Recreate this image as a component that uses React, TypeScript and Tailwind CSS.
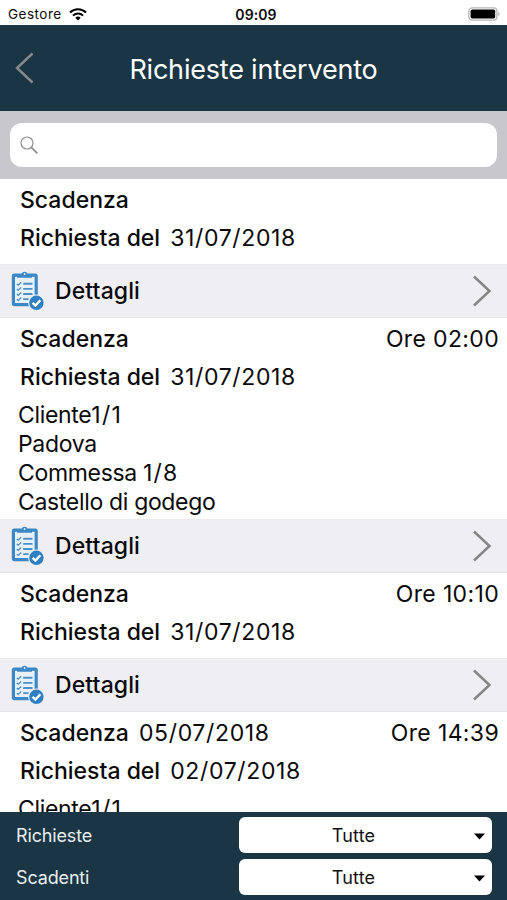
import React, { useState } from 'react';

interface Richiesta {
  id: number;
  scadenza?: string;
  richiestaDel: string;
  ora?: string;
  righe?: string[];
  parziale?: boolean;
}

const richieste: Richiesta[] = [
  { id: 1, richiestaDel: '31/07/2018' },
  {
    id: 2,
    richiestaDel: '31/07/2018',
    ora: '02:00',
    righe: ['Cliente1/1', 'Padova', 'Commessa 1/8', 'Castello di godego'],
  },
  { id: 3, richiestaDel: '31/07/2018', ora: '10:10' },
  { id: 4, scadenza: '05/07/2018', richiestaDel: '02/07/2018', ora: '14:39', righe: ['Cliente1/1'], parziale: true },
];

function ClipboardIcon() {
  return (
    <svg className="w-[34px] h-[40px] shrink-0" viewBox="0 0 34 40" fill="none">
      <rect x="2.4" y="4.2" width="22.8" height="29.4" rx="1" fill="#e9f1f8" stroke="#3c87c6" strokeWidth="3.2" />
      <path d="M6.2 6.8V4.4c0-1 .8-1.4 1.8-1.4h2.6a3.1 3.1 0 0 1 6 0h2.6c1 0 1.8.4 1.8 1.4v2.4z" fill="#3c87c6" />
      <circle cx="13.6" cy="3" r="0.9" fill="#e9f1f8" />
      <path d="M12.2 12.8h9.3M12.2 17.9h9.3M12.2 23h9.3M12.2 28.1h5.5" stroke="#4b90ca" strokeWidth="1.9" />
      <path
        d="M5.8 12.9l1.4 1.2 3-2.8M5.8 18l1.4 1.2 3-2.8M5.8 23.1l1.4 1.2 3-2.8M5.8 28.2l1.4 1.2 3-2.8"
        stroke="#4b90ca"
        strokeWidth="1.3"
      />
      <circle cx="25.4" cy="31.8" r="8.3" fill="#efeef3" />
      <circle cx="25.4" cy="31.8" r="7.2" fill="#2f80c3" />
      <path d="M21.6 31.9l2.8 2.7 4.9-5.3" stroke="#fff" strokeWidth="2.4" />
    </svg>
  );
}

function WifiIcon() {
  return (
    <svg className="w-[18px] h-[13px]" viewBox="0 0 18 13" fill="none" stroke="#000">
      <path d="M1 4.6a11.3 11.3 0 0 1 16 0" strokeWidth="2.1" />
      <path d="M4 7.6a7.1 7.1 0 0 1 10 0" strokeWidth="2" />
      <path d="M6.3 9.8a3.9 3.9 0 0 1 5.4 0L9 12.5z" fill="#000" stroke="none" />
    </svg>
  );
}

function StatusBar() {
  return (
    <div className="grid grid-cols-3 items-center h-[25px] shrink-0 bg-white pt-[3px] text-[13.5px] leading-none">
      <div className="flex items-center gap-[7px] pl-[8px]">
        <span className="tracking-[0.5px] pt-px">Gestore</span>
        <WifiIcon />
      </div>
      <div className="text-center font-semibold pl-[5px] pt-px text-[14px] tracking-[0.1px]">09:09</div>
      <div className="flex justify-end pr-[7px]">
        <svg className="w-[32px] h-[14px]" viewBox="0 0 32 14">
          <rect x="0.9" y="0.9" width="28" height="12.2" rx="3.4" fill="#fff" stroke="#b5b5b5" strokeWidth="1.3" />
          <rect x="2.6" y="2.6" width="24.6" height="8.8" rx="1.6" fill="#000" />
          <path d="M30.3 5v4c1.6-.8 1.6-3.2 0-4z" fill="#a5a5a5" />
        </svg>
      </div>
    </div>
  );
}

// Digits are set wider than the words around them
function Riga({ testo }: { testo: string }) {
  const [, parole, numeri] = testo.match(/^(\D*)(.*)$/) ?? ['', testo, ''];
  return (
    <div className="whitespace-pre tracking-[-0.33px]">
      {parole}
      {numeri && <span className="tracking-[1.2px]">{numeri}</span>}
    </div>
  );
}

function RichiestaItem({ item }: { item: Richiesta }) {
  return (
    <div className="bg-white shrink-0">
      <div className="h-[85px] pl-[20px] pr-[8px] pt-[2px]">
        <div className="flex items-center justify-between h-[38px]">
          <div className="flex gap-[10px]">
            <span className="font-medium">Scadenza</span>
            {item.scadenza && <span className="tracking-[0.65px]">{item.scadenza}</span>}
          </div>
          {item.ora && <span className="tracking-[0.35px]">Ore {item.ora}</span>}
        </div>
        <div className="flex items-center gap-[10px] h-[38px]">
          <span className="font-medium">Richiesta del</span>
          <span className="tracking-[0.65px]">{item.richiestaDel}</span>
        </div>
      </div>
      {item.righe && (
        <div className="pl-[18px] -mt-[2px] pb-[2px] leading-[29px]">
          {item.righe.map((riga) => (
            <Riga key={riga} testo={riga} />
          ))}
        </div>
      )}
      {!item.parziale && (
        <div className="flex items-center h-[54px] bg-[#efeef3] border-t border-t-[#ebebee] border-b border-b-[#e4e4e8] pl-[11px] pr-[15px]">
          <ClipboardIcon />
          <span className="ml-[10px] font-medium tracking-[0.1px]">Dettagli</span>
          <svg className="ml-auto w-[20px] h-[32px]" viewBox="0 0 20 32" fill="none">
            <path d="M2 1.5L17.5 16 2 30.5" stroke="#858585" strokeWidth="2.5" />
          </svg>
        </div>
      )}
    </div>
  );
}

function FilterRow({ label, value }: { label: string; value: string }) {
  return (
    <div className="flex items-center justify-between h-[36px]">
      <span className="text-[#e8eef0] tracking-[-0.15px] pt-[2px]">{label}</span>
      <button className="flex items-center w-[253px] h-[36px] bg-white rounded-[6px] pr-[7px] text-[#111]">
        <span className="flex-1 text-center pr-[6px] pt-[2px] tracking-[0.2px]">{value}</span>
        <svg className="w-[11px] h-[7px] mt-[2px]" viewBox="0 0 11 7">
          <path d="M0 .5h11L5.5 6.5z" fill="#000" />
        </svg>
      </button>
    </div>
  );
}

export default function App() {
  const [search, setSearch] = useState('');

  return (
    <div className="flex flex-col w-[507px] h-[900px] overflow-hidden bg-white text-[#0a0a0a] font-['Inter','Liberation_Sans',sans-serif]">
      <StatusBar />

      {/* Header */}
      <header className="grid grid-cols-[50px_1fr_50px] items-center h-[86px] shrink-0 bg-[#1a3644] text-white">
        <svg className="ml-[15px] w-[19px] h-[32px]" viewBox="0 0 19 32" fill="none">
          <path d="M17.5 1.5L2 16l15.5 14.5" stroke="#85878a" strokeWidth="2.5" />
        </svg>
        <h1 className="text-center text-[27px] leading-none tracking-[-0.2px] pt-[2px]">Richieste intervento</h1>
      </header>

      {/* Search */}
      <div className="h-[68px] shrink-0 bg-[#c8c7cc] px-[10px] pt-[12px]">
        <label className="flex items-center h-[44px] rounded-[12px] bg-white px-[10px]">
          <svg className="w-[18px] h-[18px]" viewBox="0 0 18 18" fill="none" stroke="#8e8e93">
            <circle cx="7" cy="7" r="6" strokeWidth="1.2" />
            <path d="M11.3 11.3l6 6" strokeWidth="1.8" />
          </svg>
          <input
            className="flex-1 ml-2 text-[20px] outline-none"
            value={search}
            onChange={(e) => setSearch(e.target.value)}
          />
        </label>
      </div>

      {/* List */}
      <div className="flex-1 min-h-0 overflow-hidden flex flex-col text-[23px] leading-none">
        {richieste.map((item) => (
          <RichiestaItem key={item.id} item={item} />
        ))}
      </div>

      {/* Filters */}
      <footer className="flex flex-col gap-[6px] h-[88px] shrink-0 bg-[#1a3644] pl-[16px] pr-[15px] pt-[5px] text-[18px] leading-none">
        <FilterRow label="Richieste" value="Tutte" />
        <FilterRow label="Scadenti" value="Tutte" />
      </footer>
    </div>
  );
}
